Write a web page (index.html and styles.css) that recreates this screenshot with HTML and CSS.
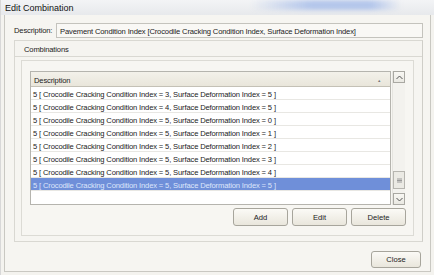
FILE: index.html
```html
<!DOCTYPE html>
<html>
<head>
  <meta charset="UTF-8">
  <title>Edit Combination</title>
  <link rel="stylesheet" href="styles.css">
</head>
<body>
  <div class="window">
    <div class="titlebar">
      <span class="title">Edit Combination</span>
      <div class="glass"></div>
    </div>
    <div class="frame">
      <div class="desc-row">
        <label for="desc">Description:</label>
        <div class="desc-box" id="desc">Pavement Condition Index [Crocodile Cracking Condition Index, Surface Deformation Index]</div>
      </div>

      <div class="panel">
        <div class="panel-head">Combinations</div>
        <div class="panel-body">
          <div class="group">
            <div class="grid-wrap">
              <div class="grid">
                <div class="grid-head">
                  <span>Description</span>
                  <span class="sort">&#9650;</span>
                </div>
                <div class="row">5 [ Crocodile Cracking Condition Index = 3, Surface Deformation Index = 5 ]</div>
                <div class="row">5 [ Crocodile Cracking Condition Index = 4, Surface Deformation Index = 5 ]</div>
                <div class="row">5 [ Crocodile Cracking Condition Index = 5, Surface Deformation Index = 0 ]</div>
                <div class="row">5 [ Crocodile Cracking Condition Index = 5, Surface Deformation Index = 1 ]</div>
                <div class="row">5 [ Crocodile Cracking Condition Index = 5, Surface Deformation Index = 2 ]</div>
                <div class="row">5 [ Crocodile Cracking Condition Index = 5, Surface Deformation Index = 3 ]</div>
                <div class="row">5 [ Crocodile Cracking Condition Index = 5, Surface Deformation Index = 4 ]</div>
                <div class="row selected">5 [ Crocodile Cracking Condition Index = 5, Surface Deformation Index = 5 ]</div>
              </div>
              <div class="scrollbar">
                <div class="sb-btn">
                  <svg width="7" height="5" viewBox="0 0 7 5"><path d="M0.5 4 L3.5 1 L6.5 4" fill="none" stroke="#555" stroke-width="1"/></svg>
                </div>
                <div class="sb-track"></div>
                <div class="sb-thumb">
                  <svg width="5" height="5" viewBox="0 0 5 5"><path d="M0 1h5M0 2.5h5M0 4h5" stroke="#888" stroke-width="0.8"/></svg>
                </div>
                <div class="sb-btn">
                  <svg width="7" height="5" viewBox="0 0 7 5"><path d="M0.5 1 L3.5 4 L6.5 1" fill="none" stroke="#555" stroke-width="1"/></svg>
                </div>
              </div>
            </div>
            <div class="actions">
              <button class="btn">Add</button>
              <button class="btn">Edit</button>
              <button class="btn">Delete</button>
            </div>
          </div>
        </div>
      </div>

      <div class="footer">
        <button class="btn close">Close</button>
      </div>
    </div>
  </div>
</body>
</html>
```

FILE: styles.css
```css
* { box-sizing: border-box; }
body {
  margin: 0;
  width: 434px;
  height: 275px;
  overflow: hidden;
  background: #f4f3ef;
  font-family: "Liberation Sans", Arial, sans-serif;
  font-size: 7.6px;
  letter-spacing: -0.15px;
  color: #222;
}
.window {
  height: 275px;
  display: flex;
  flex-direction: column;
  border-left: 1px solid #d8d8d8;
}
.titlebar {
  height: 15px;
  flex: none;
  position: relative;
  background: linear-gradient(#f3f4f6, #e7e9ec);
  padding: 3px 0 0 4px;
  font-size: 9px;
  letter-spacing: 0;
  color: #111;
}
.titlebar .glass {
  position: absolute;
  left: 250px;
  top: 0;
  width: 150px;
  height: 10px;
  background: linear-gradient(90deg, rgba(150,180,230,0), rgba(140,170,230,0.6) 40%, rgba(140,170,230,0.6) 80%, rgba(150,180,230,0));
  filter: blur(2px);
}
.title { position: relative; z-index: 1; }
.frame {
  flex: 1;
  display: flex;
  flex-direction: column;
  margin: 0 3px 3px 3px;
  border: 1px solid #c9c8c2;
  border-top: none;
  background: #f6f5f1;
  padding: 8px 7px 0 9px;
}
.desc-row {
  display: flex;
  align-items: center;
  height: 15px;
}
.desc-row label {
  width: 42px;
  flex: none;
}
.desc-box {
  flex: 1;
  height: 15px;
  border: 1px solid #c4c3bd;
  background: #f9f8f5;
  padding: 3px 3px;
  white-space: nowrap;
  overflow: hidden;
}
.panel {
  margin-top: 2px;
  border: 1px solid #d9d8d2;
  border-right: 1px solid #cfcec8;
}
.panel-head {
  height: 16px;
  padding: 4px 0 0 9px;
  border-bottom: 1px solid #d9d8d2;
  background: #f5f4f0;
}
.panel-body {
  padding: 3px 8px 5px 6px;
}
.group {
  border: 1px solid #dcdbd5;
  background: #f7f6f2;
  padding: 10px 5px 9px 8px;
}
.grid-wrap {
  display: flex;
  height: 134px;
}
.grid {
  width: 361px;
  border: 1px solid #b5b4ae;
  background: #fff;
}
.grid-head {
  display: flex;
  justify-content: space-between;
  height: 15px;
  padding: 4px 0 0 3px;
  background: linear-gradient(#f3f1ea, #e9e6db);
  border-bottom: 1px solid #c4c1b6;
}
.sort {
  font-size: 4px;
  color: #777;
  padding: 2px 9px 0 0;
}
.row {
  height: 13px;
  padding: 3px 0 0 2px;
  border-bottom: 1px solid #e8e7e3;
  white-space: nowrap;
  overflow: hidden;
}
.row.selected {
  background: #6f8fd9;
  color: #dde6fb;
}
.scrollbar {
  width: 13px;
  margin-left: 1px;
  display: flex;
  flex-direction: column;
  background: #f3f2ee;
  border-left: 1px solid #e6e5e0;
}
.sb-btn {
  height: 12px;
  display: flex;
  align-items: center;
  justify-content: center;
  border: 1px solid #a9a8a2;
  background: linear-gradient(#f8f7f3, #e9e8e2);
}
.sb-track { flex: 1; }
.sb-thumb {
  height: 18px;
  display: flex;
  align-items: center;
  justify-content: center;
  border: 1px solid #b6b5af;
  background: #ebeae4;
  margin-bottom: 4px;
}
.actions {
  display: flex;
  justify-content: flex-end;
  gap: 4px;
  margin-top: 3px;
  padding-right: 2px;
}
.btn {
  width: 55px;
  height: 18px;
  padding: 0;
  border: 1px solid #a7a59c;
  border-radius: 3px;
  background: linear-gradient(#fbfaf6, #e9e6dc);
  font-family: "Liberation Sans", Arial, sans-serif;
  font-size: 7.6px;
  color: #222;
}
.footer {
  flex: 1;
  display: flex;
  justify-content: flex-end;
  align-items: flex-end;
  padding: 0 2px 3px 0;
}
.close {
  width: 50px;
  height: 17px;
}
```
